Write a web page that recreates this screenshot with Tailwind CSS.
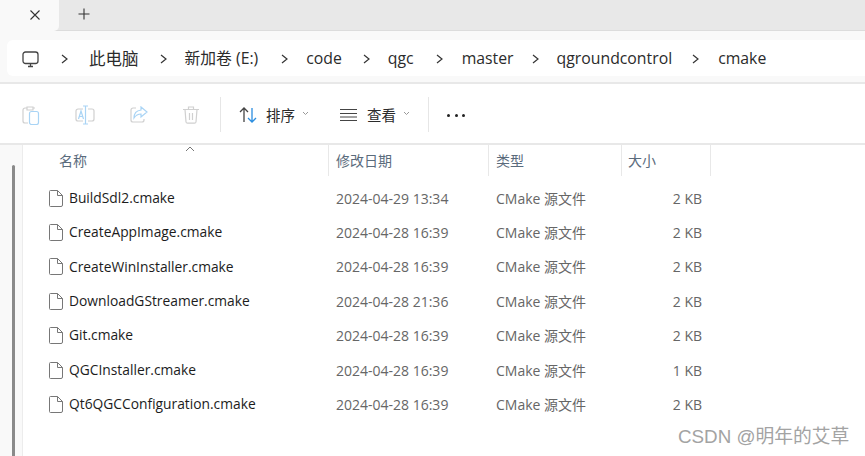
<!DOCTYPE html>
<html lang="en">
  <head>
    <meta charset="UTF-8" />
    <title>cmake</title>
    <script src="https://cdn.jsdelivr.net/npm/@tailwindcss/browser@4"></script>
  </head>
  <body class="w-[865px] h-[456px] overflow-hidden relative bg-white font-['Open_Sans','Noto_Sans_CJK_SC',sans-serif] text-[#1c1c1c]">
    <!-- tab strip -->
    <div class="h-[31px] bg-[#e8e8e8] border-b border-[#dcdcdc] flex items-center">
      <div class="w-[59px] h-[31px] bg-[#f9f9f9] rounded-br-[5px] flex justify-end items-center pr-[19px] shrink-0">
        <svg width="10" height="10" viewBox="0 0 10 10" fill="none" stroke="#333" stroke-width="1.100"><path d="M.5.500l9 9M9.500.500l-9 9"/></svg>
      </div>
      <svg class="ml-[19px] mt-[-2px]" width="12" height="12" viewBox="0 0 12 12" fill="none" stroke="#333" stroke-width="1.100"><path d="M6 .500v11M.5 6h11"/></svg>
    </div>

    <!-- address bar -->
    <div class="h-[53px] bg-[#f9f9f9] border-b-2 border-[#e8e8e8] pt-[9px]">
      <div class="ml-[7px] h-[36px] pt-[2px] bg-white rounded-l-[6px] flex items-center text-[15.800px] text-[#2b2b2b]">
        <svg class="ml-[15px]" width="17" height="17" viewBox="0 0 17 17" fill="none" stroke="#444" stroke-width="1.300"><rect x="1" y="1" width="15" height="11.500" rx="2.500"/><path d="M6 15.500h5M8.500 12.500v3"/></svg>
        <svg class="ml-[22px]" width="7" height="10" viewBox="0 0 7 10" fill="none" stroke="#333" stroke-width="1.200"><path d="M1 1l5 4-5 4"/></svg>
        <span class="ml-[21px] text-[16.500px]">此电脑</span>
        <svg class="ml-[21px]" width="7" height="10" viewBox="0 0 7 10" fill="none" stroke="#333" stroke-width="1.200"><path d="M1 1l5 4-5 4"/></svg>
        <span class="ml-[18px]">新加卷 (E:)</span>
        <svg class="ml-[23px]" width="7" height="10" viewBox="0 0 7 10" fill="none" stroke="#333" stroke-width="1.200"><path d="M1 1l5 4-5 4"/></svg>
        <span class="ml-[18px]">code</span>
        <svg class="ml-[21px]" width="7" height="10" viewBox="0 0 7 10" fill="none" stroke="#333" stroke-width="1.200"><path d="M1 1l5 4-5 4"/></svg>
        <span class="ml-[18px]">qgc</span>
        <svg class="ml-[22px]" width="7" height="10" viewBox="0 0 7 10" fill="none" stroke="#333" stroke-width="1.200"><path d="M1 1l5 4-5 4"/></svg>
        <span class="ml-[19px]">master</span>
        <svg class="ml-[18px]" width="7" height="10" viewBox="0 0 7 10" fill="none" stroke="#333" stroke-width="1.200"><path d="M1 1l5 4-5 4"/></svg>
        <span class="ml-[18px]">qgroundcontrol</span>
        <svg class="ml-[20px]" width="7" height="10" viewBox="0 0 7 10" fill="none" stroke="#333" stroke-width="1.200"><path d="M1 1l5 4-5 4"/></svg>
        <span class="ml-[19px]">cmake</span>
      </div>
    </div>

    <!-- toolbar -->
    <div class="h-[61px] pt-[2px] border-b-2 border-[#e8e8e8] flex items-center text-[14.500px] text-[#2b2b2b]">
      <svg class="ml-[22px]" width="18" height="20" viewBox="0 0 18 20" fill="none" stroke-width="1.200"><path d="M5 3H3a2 2 0 0 0-2 2v11a2 2 0 0 0 2 2h3M13 3h-2M5 2h6v3H5z" stroke="#d0d0d0"/><rect x="7.500" y="6.500" width="9" height="13" rx="2" stroke="#a9d4f5"/></svg>
      <svg class="ml-[35px]" width="20" height="20" viewBox="0 0 20 20" fill="none" stroke-width="1.200"><path d="M8 4H3a2 2 0 0 0-2 2v8a2 2 0 0 0 2 2h5M13 4h4a2 2 0 0 1 2 2v8a2 2 0 0 1-2 2h-4" stroke="#d0d0d0"/><path d="M8 1h5M8 19h5M10.500 1v18M3.500 14l2.500-8 2.500 8M4.500 11.500h3" stroke="#a9d4f5"/></svg>
      <svg class="ml-[35px]" width="18" height="18" viewBox="0 0 18 18" fill="none" stroke-width="1.200"><path d="M6 2H3a2 2 0 0 0-2 2v10a2 2 0 0 0 2 2h9a2 2 0 0 0 2-2v-1" stroke="#d0d0d0"/><path d="M11 1l6 5-6 5V8c-3 0-5 1-7 4 0-5 3-7.500 7-8z" stroke="#a9d4f5"/></svg>
      <svg class="ml-[35px]" width="16" height="18" viewBox="0 0 16 18" fill="none" stroke="#d0d0d0" stroke-width="1.200"><path d="M0 3.500h16M5.500 3.500V1h5v2.500M2 3.500l1 12.500a1.500 1.500 0 0 0 1.500 1.200h7A1.500 1.500 0 0 0 13 16l1-12.500M6.500 7v7M9.500 7v7"/></svg>
      <div class="ml-[21px] w-px h-[35px] bg-[#e6e6e6]"></div>
      <svg class="ml-[18px]" width="19" height="16" viewBox="0 0 19 16" fill="none" stroke-width="1.300"><path d="M5 15V1M1 5l4-4 4 4" stroke="#444"/><path d="M13 1v14M9 11l4 4 4-4" stroke="#2b8ee0"/></svg>
      <span class="ml-[8px] mt-[2px]">排序</span>
      <svg class="ml-[7px] mt-[-3px]" width="7" height="5" viewBox="0 0 7 5" fill="none" stroke="#999"><path d="M1 1l2.500 2.500L6 1"/></svg>
      <svg class="ml-[31px]" width="17" height="12" viewBox="0 0 17 12" fill="none" stroke="#444"><path d="M0 .5h17M0 4.500h17M0 8h17M0 11.500h17"/></svg>
      <span class="ml-[10px] mt-[2px]">查看</span>
      <svg class="ml-[7px] mt-[-3px]" width="7" height="5" viewBox="0 0 7 5" fill="none" stroke="#999"><path d="M1 1l2.500 2.500L6 1"/></svg>
      <div class="ml-[18px] w-px h-[35px] bg-[#e6e6e6]"></div>
      <div class="ml-[18px] mt-[1px] flex gap-[4.500px]">
        <span class="w-[3px] h-[3px] rounded-full bg-[#222]"></span>
        <span class="w-[3px] h-[3px] rounded-full bg-[#222]"></span>
        <span class="w-[3px] h-[3px] rounded-full bg-[#222]"></span>
      </div>
    </div>

    <div class="flex h-[311px]">
      <!-- nav pane -->
      <div class="w-[23px] bg-[#f9f9f9] border-r border-[#ececec] pt-[20px] pl-[12px] shrink-0">
        <div class="w-[3px] h-[300px] bg-[#8a8a8a] rounded-full"></div>
      </div>

      <!-- file list -->
      <div class="flex-1 relative">
        <svg class="absolute left-[162px] top-[1px]" width="10" height="6" viewBox="0 0 10 6" fill="none" stroke="#777"><path d="M1 5l4-4 4 4"/></svg>
        <div class="h-[31px] flex text-[14px] text-[#5a6b7c]">
          <div class="w-[306px] pl-[36px] pt-[5px] border-r border-[#e8e8e8]">名称</div>
          <div class="w-[160px] pl-[7px] pt-[5px] border-r border-[#e8e8e8]">修改日期</div>
          <div class="w-[133px] pl-[7px] pt-[5px] border-r border-[#e8e8e8]">类型</div>
          <div class="w-[89px] pl-[6px] pt-[5px] border-r border-[#e8e8e8]">大小</div>
        </div>
        <div class="pt-[5px] text-[13.800px]">
          <div class="h-[34.400px] flex items-center">
            <div class="w-[306px] flex items-center pl-[26px]">
              <svg width="14" height="17" viewBox="0 0 14 17" fill="none" stroke="#777"><path d="M1.500.5h7l5 5v9.500a1.500 1.500 0 0 1-1.500 1.500H1.500A1 1 0 0 1 .5 15.500v-14a1 1 0 0 1 1-1zM8.500.5v5h5"/></svg>
              <span class="ml-[6px] text-[#1c1c1c]">BuildSdl2.cmake</span>
            </div>
            <div class="w-[160px] pl-[7px] text-[14px] text-[#666]">2024-04-29 13:34</div>
            <div class="w-[133px] pl-[7px] text-[14px] text-[#666]">CMake 源文件</div>
            <div class="w-[80px] text-right text-[14px] text-[#666]">2 KB</div>
          </div>
          <div class="h-[34.400px] flex items-center">
            <div class="w-[306px] flex items-center pl-[26px]">
              <svg width="14" height="17" viewBox="0 0 14 17" fill="none" stroke="#777"><path d="M1.500.5h7l5 5v9.500a1.500 1.500 0 0 1-1.500 1.500H1.500A1 1 0 0 1 .5 15.500v-14a1 1 0 0 1 1-1zM8.500.5v5h5"/></svg>
              <span class="ml-[6px] text-[#1c1c1c]">CreateAppImage.cmake</span>
            </div>
            <div class="w-[160px] pl-[7px] text-[14px] text-[#666]">2024-04-28 16:39</div>
            <div class="w-[133px] pl-[7px] text-[14px] text-[#666]">CMake 源文件</div>
            <div class="w-[80px] text-right text-[14px] text-[#666]">2 KB</div>
          </div>
          <div class="h-[34.400px] flex items-center">
            <div class="w-[306px] flex items-center pl-[26px]">
              <svg width="14" height="17" viewBox="0 0 14 17" fill="none" stroke="#777"><path d="M1.500.5h7l5 5v9.500a1.500 1.500 0 0 1-1.500 1.500H1.500A1 1 0 0 1 .5 15.500v-14a1 1 0 0 1 1-1zM8.500.5v5h5"/></svg>
              <span class="ml-[6px] text-[#1c1c1c]">CreateWinInstaller.cmake</span>
            </div>
            <div class="w-[160px] pl-[7px] text-[14px] text-[#666]">2024-04-28 16:39</div>
            <div class="w-[133px] pl-[7px] text-[14px] text-[#666]">CMake 源文件</div>
            <div class="w-[80px] text-right text-[14px] text-[#666]">2 KB</div>
          </div>
          <div class="h-[34.400px] flex items-center">
            <div class="w-[306px] flex items-center pl-[26px]">
              <svg width="14" height="17" viewBox="0 0 14 17" fill="none" stroke="#777"><path d="M1.500.5h7l5 5v9.500a1.500 1.500 0 0 1-1.500 1.500H1.500A1 1 0 0 1 .5 15.500v-14a1 1 0 0 1 1-1zM8.500.5v5h5"/></svg>
              <span class="ml-[6px] text-[#1c1c1c]">DownloadGStreamer.cmake</span>
            </div>
            <div class="w-[160px] pl-[7px] text-[14px] text-[#666]">2024-04-28 21:36</div>
            <div class="w-[133px] pl-[7px] text-[14px] text-[#666]">CMake 源文件</div>
            <div class="w-[80px] text-right text-[14px] text-[#666]">2 KB</div>
          </div>
          <div class="h-[34.400px] flex items-center">
            <div class="w-[306px] flex items-center pl-[26px]">
              <svg width="14" height="17" viewBox="0 0 14 17" fill="none" stroke="#777"><path d="M1.500.5h7l5 5v9.500a1.500 1.500 0 0 1-1.500 1.500H1.500A1 1 0 0 1 .5 15.500v-14a1 1 0 0 1 1-1zM8.500.5v5h5"/></svg>
              <span class="ml-[6px] text-[#1c1c1c]">Git.cmake</span>
            </div>
            <div class="w-[160px] pl-[7px] text-[14px] text-[#666]">2024-04-28 16:39</div>
            <div class="w-[133px] pl-[7px] text-[14px] text-[#666]">CMake 源文件</div>
            <div class="w-[80px] text-right text-[14px] text-[#666]">2 KB</div>
          </div>
          <div class="h-[34.400px] flex items-center">
            <div class="w-[306px] flex items-center pl-[26px]">
              <svg width="14" height="17" viewBox="0 0 14 17" fill="none" stroke="#777"><path d="M1.500.5h7l5 5v9.500a1.500 1.500 0 0 1-1.500 1.500H1.500A1 1 0 0 1 .5 15.500v-14a1 1 0 0 1 1-1zM8.500.5v5h5"/></svg>
              <span class="ml-[6px] text-[#1c1c1c]">QGCInstaller.cmake</span>
            </div>
            <div class="w-[160px] pl-[7px] text-[14px] text-[#666]">2024-04-28 16:39</div>
            <div class="w-[133px] pl-[7px] text-[14px] text-[#666]">CMake 源文件</div>
            <div class="w-[80px] text-right text-[14px] text-[#666]">1 KB</div>
          </div>
          <div class="h-[34.400px] flex items-center">
            <div class="w-[306px] flex items-center pl-[26px]">
              <svg width="14" height="17" viewBox="0 0 14 17" fill="none" stroke="#777"><path d="M1.500.5h7l5 5v9.500a1.500 1.500 0 0 1-1.500 1.500H1.500A1 1 0 0 1 .5 15.500v-14a1 1 0 0 1 1-1zM8.500.5v5h5"/></svg>
              <span class="ml-[6px] text-[#1c1c1c]">Qt6QGCConfiguration.cmake</span>
            </div>
            <div class="w-[160px] pl-[7px] text-[14px] text-[#666]">2024-04-28 16:39</div>
            <div class="w-[133px] pl-[7px] text-[14px] text-[#666]">CMake 源文件</div>
            <div class="w-[80px] text-right text-[14px] text-[#666]">2 KB</div>
          </div>
        </div>
      </div>
    </div>

    <!-- watermark -->
    <div class="absolute left-[678px] top-[424px] text-[18.800px] leading-[26px] text-[#a3a3a3] font-['Liberation_Sans','Noto_Sans_CJK_SC',sans-serif]">CSDN @明年的艾草</div>
  </body>
</html>
